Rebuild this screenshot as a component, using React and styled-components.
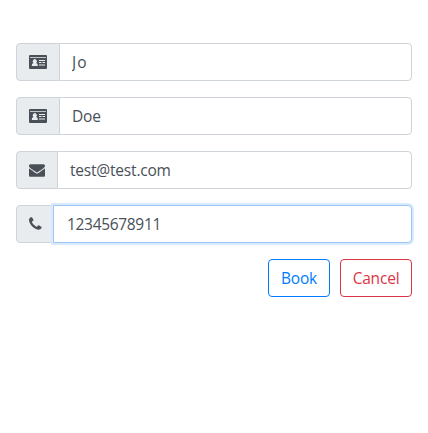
import React, { useState } from 'react';
import styled, { createGlobalStyle, css } from 'styled-components';

const GlobalStyle = createGlobalStyle`
  *, *::before, *::after { box-sizing: border-box; }
  body {
    margin: 0;
    background: #fff;
    color: #212529;
    font: 400 16px/1.5 "Open Sans", sans-serif;
  }
`;

const Form = styled.form`
  display: flex;
  flex-direction: column;
  gap: 16px;
  padding: 43px 16px 0;
`;

const InputGroup = styled.div`
  display: flex;
  height: 38px;
`;

const Prepend = styled.label`
  display: flex;
  align-items: center;
  flex: none;
  width: ${({ $width }) => $width}px;
  padding: 0 12px;
  margin-right: -1px;
  color: #495057;
  background: #e9ecef;
  border: 1px solid #ced4da;
  border-radius: 4px 0 0 4px;
`;

const Glyph = styled.svg`
  display: block;
  flex: none;
  width: ${({ $width }) => $width}px;
  height: 16px;
  fill: currentColor;
`;

const Input = styled.input`
  position: relative;
  flex: 1;
  min-width: 0;
  margin: 0;
  padding: 8px 12px 6px;
  color: #495057;
  background: #fff;
  border: 1px solid #ced4da;
  border-radius: 0 4px 4px 0;
  outline: 0;
  font: inherit;
  font-size: 15.5px;
  letter-spacing: ${({ $tracking }) => $tracking}px;
  ${({ $active }) => $active && css`
    z-index: 1;
    padding-left: 13px;
    border-color: #9dc7f3;
    box-shadow: 0 0 0 2px #d9eaff;
  `}
`;

const Actions = styled.div`
  display: flex;
  justify-content: flex-end;
  gap: 10px;
`;

const Button = styled.button`
  width: ${({ $width }) => $width}px;
  height: 38px;
  padding: 2px 0 0;
  color: ${({ $color }) => $color};
  background: transparent;
  border: 1px solid ${({ $color }) => $color};
  border-radius: 4px;
  font: inherit;
  font-size: 15.5px;
  letter-spacing: -0.2px;
  cursor: pointer;
`;

function IdCard() {
  return (
    <Glyph $width={18} viewBox="0 0 18 16">
      <path fillRule="evenodd" d="M1 1H17Q18 1 18 2V14Q18 15 17 15H1Q0 15 0 14V2Q0 1 1 1ZM1 3V3.8H17V3ZM2.8 12H8.8Q9.1 9.2 7.2 8.9A2.1 2.1 0 1 0 4.4 8.9Q2.5 9.2 2.8 12ZM10 6V7H16V6ZM10 8V9H12.5V8ZM13.5 8V9H16V8ZM10 10.5V11.5H16V10.5Z" />
    </Glyph>
  );
}

function Envelope() {
  return (
    <Glyph $width={16} viewBox="0 0 1792 1792">
      <path d="M1792 710v794q0 66-47 113t-113 47h-1472q-66 0-113-47t-47-113v-794q44 49 101 87 362 246 497 345 57 42 92.5 65.5t94.5 48 110 24.5h2q51 0 110-24.5t94.5-48 92.5-65.5q170-123 498-345 57-39 100-87zm0-294q0 79-49 151t-122 123q-376 261-468 325-10 7-42.5 31t-54 38.5-52 32.5-57.5 27-50 9h-2q-23 0-50-9t-57.5-27-52-32.5-54-38.5-42.5-31q-91-64-262-182.5t-205-142.5q-62-42-117-115.5t-55-136.5q0-78 41.5-130t118.5-52h1472q65 0 112.5 47t47.5 113z" />
    </Glyph>
  );
}

function Phone() {
  return (
    <Glyph $width={12.57} viewBox="192 0 1408 1792">
      <path d="M1600 1240q0 27-10 70.5t-21 68.5q-21 50-122 106-94 51-186 51-27 0-53-3.5t-57.5-12.5-47-14.5-55.5-20.5-49-18q-98-35-175-83-127-79-264-216t-216-264q-48-77-83-175-3-9-18-49t-20.5-55.5-14.5-47-12.5-57.5-3.5-53q0-92 51-186 56-101 106-122 25-11 68.5-21t70.5-10q14 0 21 3 18 6 53 76 11 19 30 54t35 63.5 31 53.5q3 4 17.5 25t21.5 35.5 7 28.5q0 20-28.5 50t-62 55-62 53-28.5 46q0 9 5 22.5t8.5 20.5 14 24 11.5 19q76 137 174 235t235 174q2 1 19 11.5t24 14 20.5 8.5 22.5 5q18 0 46-28.5t53-62 55-62 50-28.5q14 0 28.5 7t35.5 21.5 25 17.5q25 15 53.5 31t63.5 35 54 30q70 35 76 53 3 7 3 21z" />
    </Glyph>
  );
}

const fields = [
  { id: 'first', icon: IdCard, width: 44, tracking: 1, value: 'Jo' },
  { id: 'last', icon: IdCard, width: 44, tracking: -0.2, value: 'Doe' },
  { id: 'email', icon: Envelope, width: 42, tracking: -0.2, value: 'test@test.com' },
  { id: 'phone', icon: Phone, width: 38, tracking: -0.32, value: '12345678911', active: true },
];

export default function App() {
  const [values, setValues] = useState(Object.fromEntries(fields.map((f) => [f.id, f.value])));
  return (
    <>
      <GlobalStyle />
      <Form onSubmit={(e) => e.preventDefault()}>
        {fields.map(({ id, icon: Icon, width, tracking, active }) => (
          <InputGroup key={id}>
            <Prepend htmlFor={id} $width={width}><Icon /></Prepend>
            <Input
              id={id}
              value={values[id]}
              $active={active}
              $tracking={tracking}
              onChange={(e) => setValues({ ...values, [id]: e.target.value })}
            />
          </InputGroup>
        ))}
        <Actions>
          <Button type="submit" $color="#007bff" $width={62}>Book</Button>
          <Button type="button" $color="#dc3545" $width={72}>Cancel</Button>
        </Actions>
      </Form>
    </>
  );
}
